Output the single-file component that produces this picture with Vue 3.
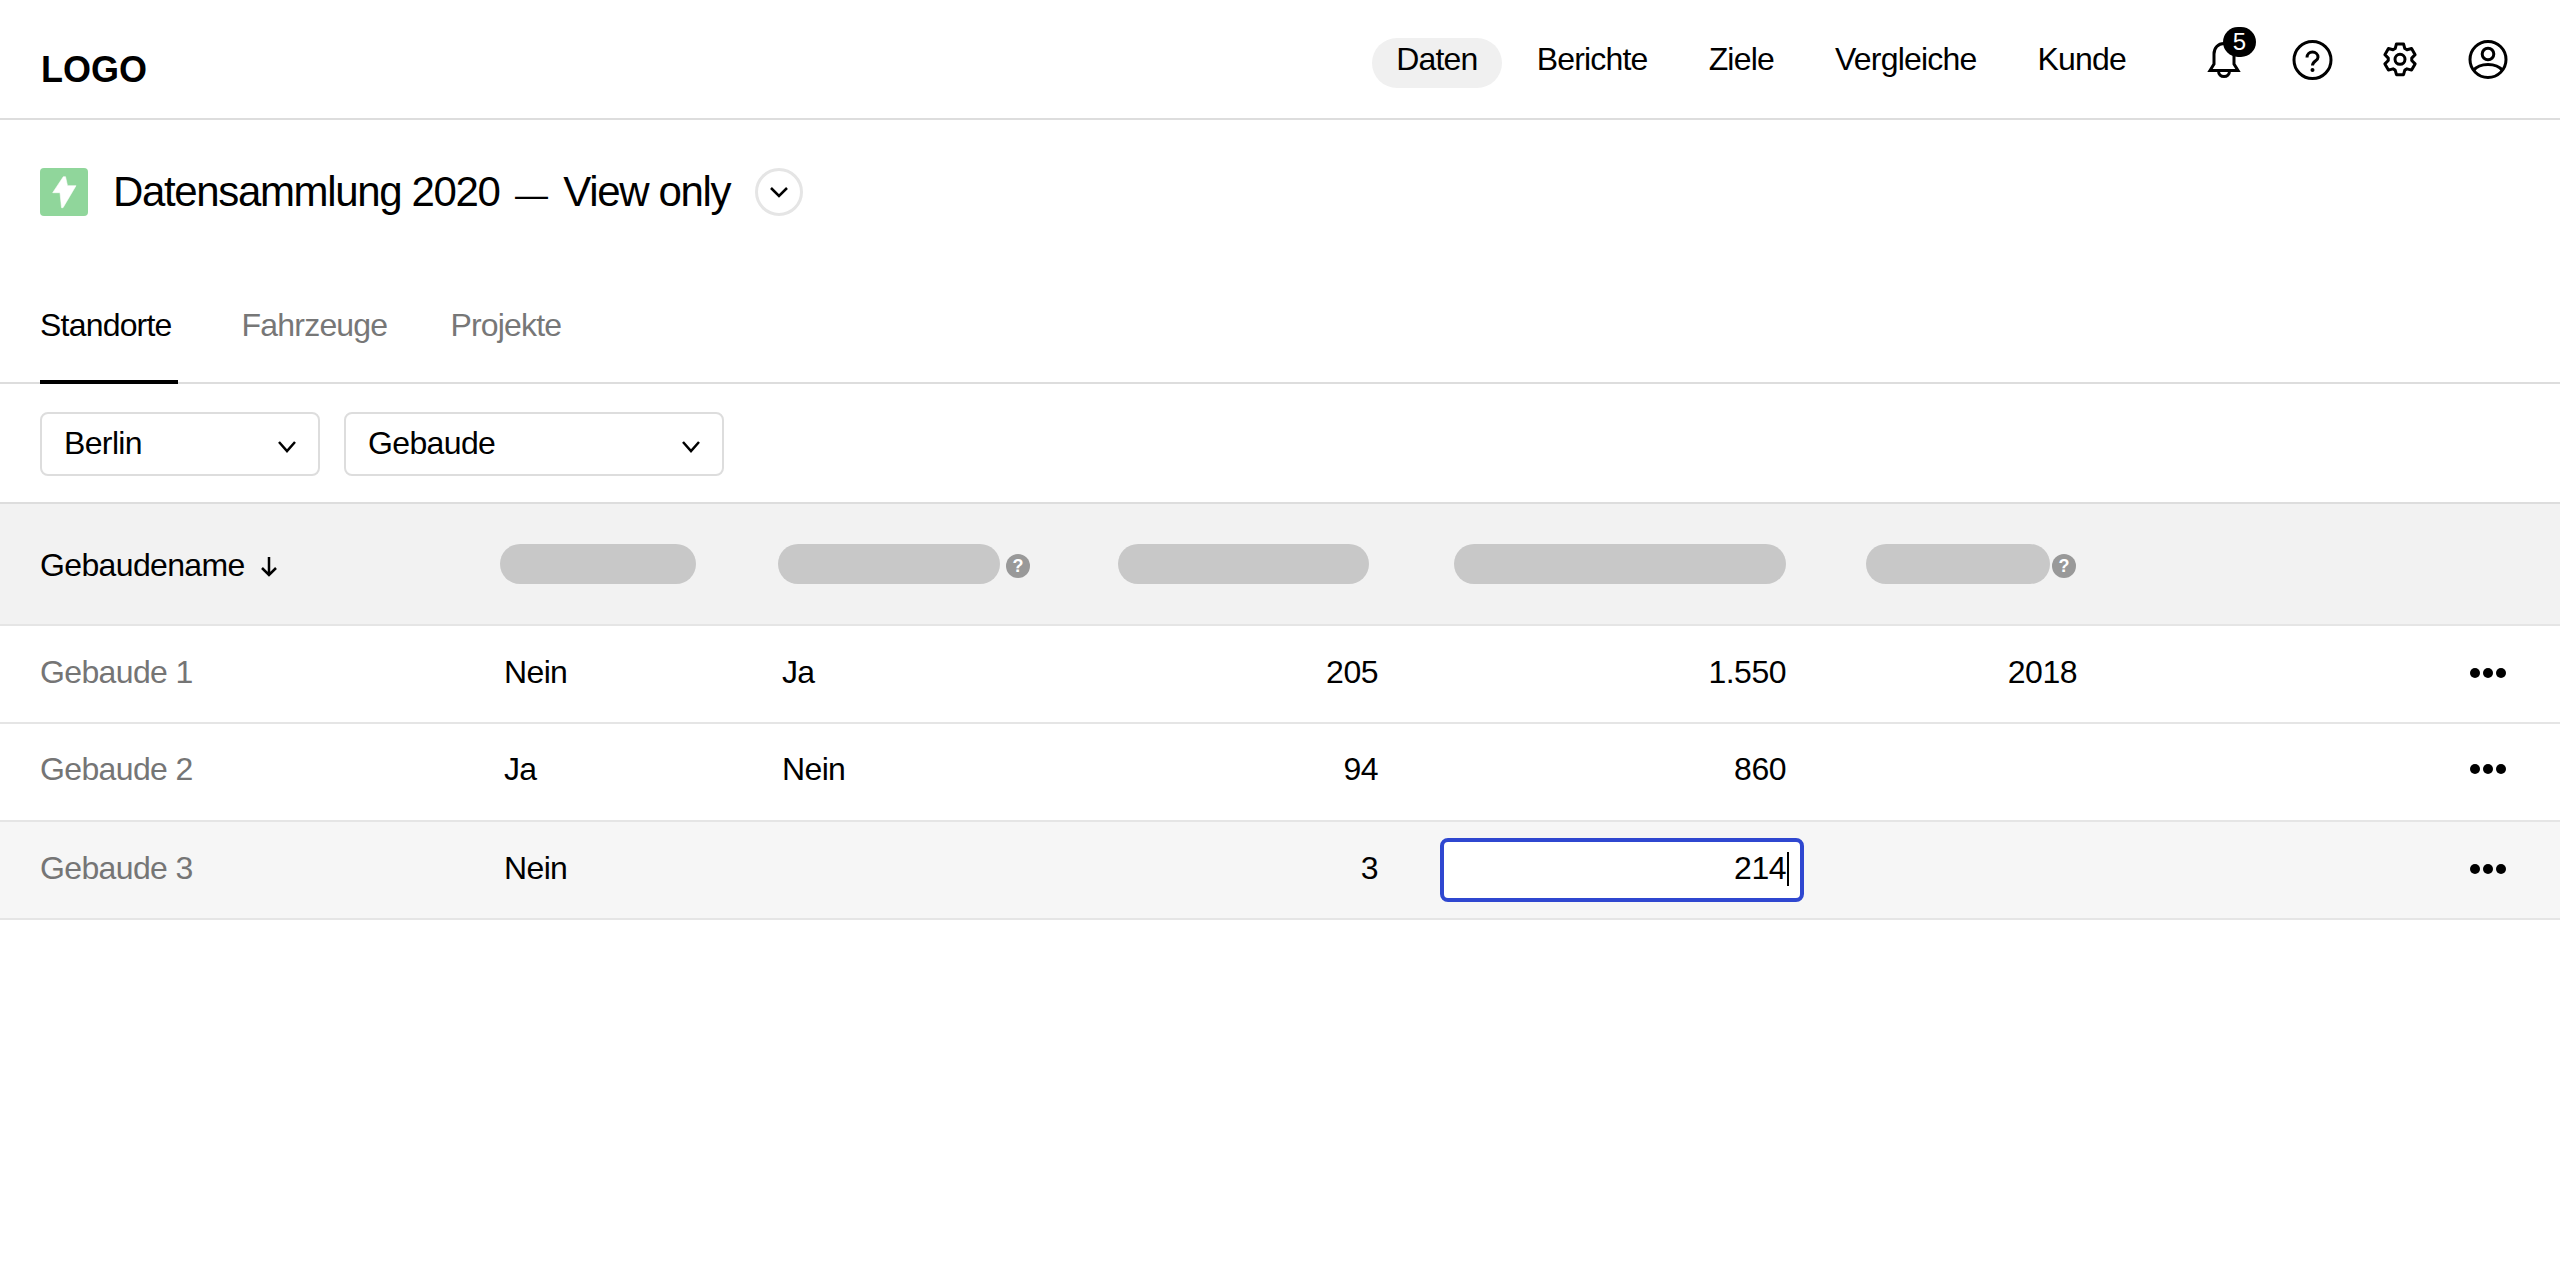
<script setup>
const navItems = ['Daten', 'Berichte', 'Ziele', 'Vergleiche', 'Kunde']
const tabs = ['Standorte', 'Fahrzeuge', 'Projekte']
const rows = [
  { name: 'Gebaude 1', a: 'Nein', b: 'Ja', c: '205', d: '1.550', e: '2018', lift: 'lift-a' },
  { name: 'Gebaude 2', a: 'Ja', b: 'Nein', c: '94', d: '860', e: '', lift: 'lift-b' },
  { name: 'Gebaude 3', a: 'Nein', b: '', c: '3', d: '214', e: '', lift: 'lift-a', editing: true },
]

function polar(r, deg) {
  const t = (deg * Math.PI) / 180
  return `${(24 + r * Math.sin(t)).toFixed(2)} ${(24.3 - r * Math.cos(t)).toFixed(2)}`
}
const gearPath = (() => {
  const pts = []
  for (let i = 0; i < 6; i++) {
    const a = i * 60
    pts.push(polar(11.8, a - 24), polar(15.8, a - 13), polar(15.8, a + 13), polar(11.8, a + 24))
  }
  return 'M' + pts.join('L') + 'Z'
})()
</script>

<template>
  <div class="page">
    <header class="topbar">
      <div class="logo">LOGO</div>
      <nav class="nav">
        <a v-for="(n, i) in navItems" :key="n" class="nav-item" :class="{ active: i === 0 }">{{ n }}</a>
      </nav>
      <div class="icons">
        <span class="icon bell">
          <svg viewBox="0 0 48 48" width="48" height="48" fill="none" stroke="#000" stroke-width="3">
            <path d="M10 35.500 14 29V19C14 13 18 8.500 24 8.500S34 13 34 19V29L38 35.500Z" />
            <path d="M18.500 36c0 3.500 2.500 5.500 5.500 5.500s5.500-2 5.500-5.500" />
          </svg>
          <span class="badge">5</span>
        </span>
        <span class="icon">
          <svg viewBox="0 0 48 48" width="48" height="48" fill="none" stroke="#000" stroke-width="3">
            <circle cx="24.500" cy="25" r="18.500" />
            <path d="M19 22.500c0-3.300 2.400-5.500 5.500-5.500s5.500 2.200 5.500 5.200c0 4-5.500 3.800-5.500 8.300" />
            <circle cx="24.500" cy="35" r="2" fill="#000" stroke="none" />
          </svg>
        </span>
        <span class="icon">
          <svg viewBox="0 0 48 48" width="48" height="48" fill="none" stroke="#000" stroke-width="3" stroke-linejoin="round">
            <path :d="gearPath" />
            <circle cx="24" cy="24.300" r="5" />
          </svg>
        </span>
        <span class="icon">
          <svg viewBox="0 0 48 48" width="48" height="48" fill="none" stroke="#000" stroke-width="3">
            <circle cx="24" cy="24.500" r="18" />
            <circle cx="24" cy="19" r="5.800" />
            <path d="M9.500 35.500C13 31 18 29.500 24 29.500S35 31 38.500 35.500" />
          </svg>
        </span>
      </div>
    </header>

    <section class="title-row">
      <span class="bolt">
        <svg viewBox="0 0 48 48" width="48" height="48">
          <path d="M23.300 8.700H25.500L27.500 17.700H36L23 39.700H21.500L20 24.700H12.700Z" fill="#fff" stroke="#fff" stroke-width=".6" stroke-linejoin="round" />
        </svg>
      </span>
      <h1 class="title">Datensammlung 2020 <span class="dash">—</span> View only</h1>
      <span class="round-btn">
        <svg viewBox="0 0 20 20" width="20" height="20" fill="none" stroke="#000" stroke-width="2.500">
          <path d="M2 6l8 8 8-8" />
        </svg>
      </span>
    </section>

    <div class="tabs">
      <a v-for="(t, i) in tabs" :key="t" class="tab" :class="{ current: i === 0 }">{{ t }}</a>
    </div>

    <div class="filters">
      <div class="select berlin">
        <span class="select-label">Berlin</span>
        <svg viewBox="0 0 20 20" width="20" height="20" fill="none" stroke="#000" stroke-width="2.500">
          <path d="M2 4l8 9 8-9" />
        </svg>
      </div>
      <div class="select gebaude">
        <span class="select-label">Gebaude</span>
        <svg viewBox="0 0 20 20" width="20" height="20" fill="none" stroke="#000" stroke-width="2.500">
          <path d="M2 4l8 9 8-9" />
        </svg>
      </div>
    </div>

    <div class="grid head">
      <div class="name-head">
        Gebaudename
        <svg viewBox="0 0 20 24" width="20" height="24" fill="none" stroke="#000" stroke-width="2.500">
          <path d="M10 3v18M3 14l7 7 7-7" />
        </svg>
      </div>
      <div class="head-cell"><span class="pill w196"></span></div>
      <div class="head-cell"><span class="pill w222"></span><span class="hint">?</span></div>
      <div class="head-cell"><span class="pill w250"></span></div>
      <div class="head-cell"><span class="pill w332"></span></div>
      <div class="head-cell"><span class="pill w184"></span><span class="hint">?</span></div>
      <div></div>
    </div>

    <div v-for="r in rows" :key="r.name" class="grid row" :class="[r.lift, { editing: r.editing }]">
      <div class="name">{{ r.name }}</div>
      <div class="txt">{{ r.a }}</div>
      <div class="txt">{{ r.b }}</div>
      <div class="num c3">{{ r.c }}</div>
      <div v-if="r.editing" class="edit-box">
        <span>{{ r.d }}</span><i class="caret"></i>
      </div>
      <div v-else class="num c4">{{ r.d }}</div>
      <div class="num c5">{{ r.e }}</div>
      <div class="dots"><b></b><b></b><b></b></div>
    </div>
  </div>
</template>

<style>
html, body { margin: 0; background: #fff; }
</style>

<style scoped>
.page {
  font-family: "Liberation Sans", Arial, sans-serif;
  font-size: 32px;
  letter-spacing: -0.64px;
  color: #000;
  min-height: 1280px;
  background: #fff;
}
.topbar {
  display: flex;
  align-items: center;
  height: 118px;
  border-bottom: 2px solid #ddd;
  padding: 0 48px 0 40px;
}
.logo {
  font-weight: 700;
  font-size: 36px;
  letter-spacing: 0;
  margin-top: 22px;
  margin-left: 1px;
}
.nav {
  margin-left: auto;
  margin-top: 8px;
  display: flex;
  gap: 13px;
}
.nav-item {
  height: 50px;
  line-height: 42px;
  padding: 0 24px;
  border-radius: 25px;
  letter-spacing: -0.8px;
}
.nav-item.active { background: #f0f0f0; margin-right: -2px; }
.icons {
  display: flex;
  gap: 40px;
  margin-left: 50px;
}
.icon {
  width: 48px;
  height: 48px;
  display: flex;
  align-items: center;
  justify-content: center;
  position: relative;
}
.badge {
  position: absolute;
  left: 23px;
  top: -8px;
  width: 33px;
  height: 30px;
  border-radius: 15px;
  background: #000;
  color: #fff;
  font-size: 24px;
  letter-spacing: 0;
  line-height: 30px;
  text-align: center;
}
.title-row {
  display: flex;
  align-items: center;
  height: 48px;
  padding: 48px 40px 0;
}
.bolt {
  width: 48px;
  height: 48px;
  border-radius: 4px;
  background: #90d69b;
}
.bolt svg { display: block; }
.title {
  margin: 2px 0 0 25px;
  font-weight: 400;
  font-size: 42px;
  letter-spacing: -1.35px;
  line-height: 48px;
}
.dash {
  display: inline-block;
  font-size: 33px;
  letter-spacing: 0;
  margin: 0 5px;
}
.round-btn {
  box-sizing: border-box;
  width: 48px;
  height: 48px;
  margin-left: 25px;
  border: 3px solid #e5e5e5;
  border-radius: 50%;
  display: flex;
  align-items: center;
  justify-content: center;
}
.tabs {
  margin-top: 64px;
  padding: 0 40px;
  display: flex;
  gap: 64px;
  border-bottom: 2px solid #ddd;
}
.tab {
  padding: 24px 0 34px;
  line-height: 42px;
  letter-spacing: -0.8px;
  color: #777;
  border-bottom: 4px solid transparent;
  margin-bottom: -2px;
}
.tab:last-child { margin-left: -1px; }
.tab.current { color: #000; border-bottom-color: #000; padding-right: 6px; }
.filters {
  display: flex;
  gap: 24px;
  padding: 28px 40px 26px;
}
.select {
  box-sizing: border-box;
  height: 64px;
  border: 2px solid #ddd;
  border-radius: 8px;
  padding: 0 21px 0 22px;
  display: flex;
  align-items: center;
  justify-content: space-between;
}
.select-label { margin-bottom: 2px; }
.select svg { margin-top: 7px; }
.berlin { width: 280px; }
.gebaude { width: 380px; }
.grid {
  display: grid;
  grid-template-columns: 500px 278px 340px 336px 412px 1fr 100px;
  align-items: center;
}
.head {
  height: 120px;
  background: #f2f2f2;
  border-top: 2px solid #ddd;
  border-bottom: 2px solid #e5e5e5;
}
.name-head {
  padding-left: 40px;
  margin-top: 3px;
  display: flex;
  align-items: center;
  gap: 14px;
}
.head-cell { display: flex; align-items: center; gap: 4px; }
.pill {
  height: 40px;
  border-radius: 20px;
  background: #c8c8c8;
}
.w196 { width: 196px; }
.w222 { width: 222px; margin-right: 2px; }
.w250 { width: 251px; }
.w332 { width: 332px; }
.w184 { width: 184px; margin-right: -2px; }
.hint {
  width: 24px;
  height: 24px;
  margin-top: 4px;
  border-radius: 50%;
  background: #999;
  color: #fff;
  font-size: 18px;
  font-weight: 700;
  letter-spacing: 0;
  line-height: 24px;
  text-align: center;
}
.row {
  box-sizing: border-box;
  height: 98px;
  border-bottom: 2px solid #e5e5e5;
}
.lift-a { padding-bottom: 3px; }
.lift-b { padding-bottom: 6px; }
.row.editing { background: #f6f6f6; }
.name { padding-left: 40px; color: #757575; }
.txt { padding-left: 4px; }
.num { text-align: right; letter-spacing: -0.5px; }
.c3 { padding-right: 76px; }
.c4 { padding-right: 80px; }
.c5 { width: 211px; }
.edit-box {
  box-sizing: border-box;
  justify-self: end;
  width: 364px;
  height: 64px;
  margin-top: 3px;
  margin-right: 62px;
  background: #fff;
  border: 4px solid #2f47d0;
  border-radius: 8px;
  display: flex;
  align-items: center;
  justify-content: flex-end;
  padding: 0 14px 3px 0;
  letter-spacing: -0.5px;
  position: relative;
}
.caret {
  position: absolute;
  right: 11px;
  top: 10px;
  width: 2px;
  height: 34px;
  background: #000;
}
.dots {
  display: flex;
  gap: 3px;
  justify-content: flex-end;
  padding-right: 54px;
}
.dots b {
  width: 10px;
  height: 10px;
  border-radius: 50%;
  background: #000;
}
</style>
